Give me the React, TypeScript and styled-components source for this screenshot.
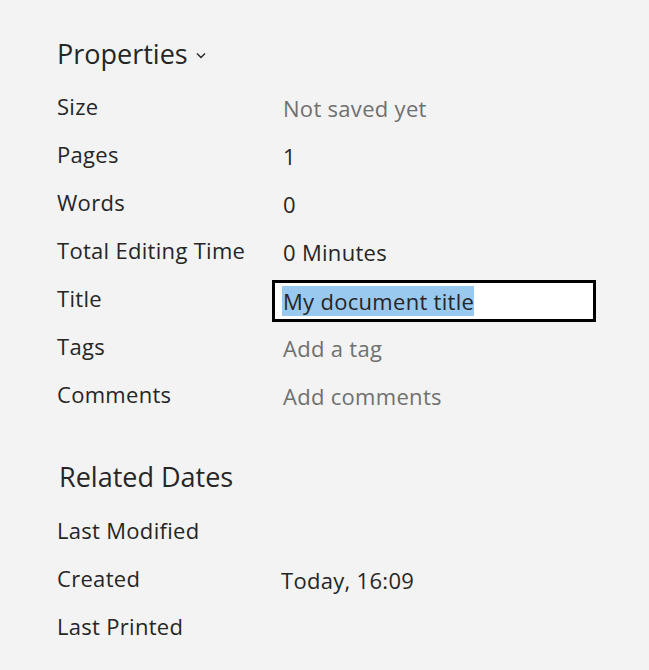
import React from 'react';
import styled, { createGlobalStyle } from 'styled-components';

const GlobalStyle = createGlobalStyle`
  html, body {
    margin: 0;
    padding: 0;
    background: #f3f3f3;
  }
  body {
    font-family: "Open Sans", "Noto Sans", sans-serif;
    color: #262626;
  }
`;

type Row = {
  label: string;
  value?: string;
  muted?: boolean;
  editable?: boolean;
};

const properties: Row[] = [
  { label: 'Size', value: 'Not saved yet', muted: true },
  { label: 'Pages', value: '1' },
  { label: 'Words', value: '0' },
  { label: 'Total Editing Time', value: '0 Minutes' },
  { label: 'Title', value: 'My document title', editable: true },
  { label: 'Tags', value: 'Add a tag', muted: true },
  { label: 'Comments', value: 'Add comments', muted: true },
];

const dates: Row[] = [
  { label: 'Last Modified' },
  { label: 'Created', value: 'Today, 16:09' },
  { label: 'Last Printed' },
];

const Chevron = () => (
  <svg width="10" height="7" viewBox="0 0 10 7" fill="none">
    <path d="M1 1.5L5 5.5L9 1.5" stroke="#262626" strokeWidth="1.4" />
  </svg>
);

export default function App() {
  return (
    <>
      <GlobalStyle />
      <StyledPage>
        <StyledHeading>
          Properties
          <StyledChevron><Chevron /></StyledChevron>
        </StyledHeading>
        <StyledList>
          {properties.map((r) => (
            <StyledRow key={r.label}>
              <StyledLabel>{r.label}</StyledLabel>
              {r.editable ? (
                <StyledInputBox>
                  <StyledSelected>{r.value}</StyledSelected>
                </StyledInputBox>
              ) : (
                <StyledValue $muted={r.muted}>{r.value}</StyledValue>
              )}
            </StyledRow>
          ))}
        </StyledList>

        <StyledSubHeading>Related Dates</StyledSubHeading>
        <StyledList>
          {dates.map((r) => (
            <StyledRow key={r.label} $dateRow>
              <StyledLabel>{r.label}</StyledLabel>
              <StyledValue>{r.value}</StyledValue>
            </StyledRow>
          ))}
        </StyledList>
      </StyledPage>
    </>
  );
}

const StyledPage = styled.div`
  width: 649px;
  height: 670px;
  box-sizing: border-box;
  padding: 34px 0 0 57px;
`;

const StyledHeading = styled.h2`
  margin: 0 0 11px;
  display: flex;
  align-items: center;
  font-size: 27px;
  font-weight: 400;
  line-height: 40px;
  color: #262626;
`;

const StyledChevron = styled.span`
  display: inline-flex;
  margin-left: 8px;
  margin-top: 2px;
`;

const StyledSubHeading = styled.h2`
  margin: 36px 0 12px 2px;
  font-size: 27px;
  font-weight: 400;
  line-height: 40px;
  color: #262626;
`;

const StyledList = styled.div`
  display: flex;
  flex-direction: column;
`;

const StyledRow = styled.div<{ $dateRow?: boolean }>`
  display: grid;
  grid-template-columns: ${(p) => (p.$dateRow ? '224px' : '226px')} 1fr;
  align-items: center;
  height: 48px;
  font-size: 22px;
  letter-spacing: 0.3px;
`;

const StyledLabel = styled.div`
  color: #262626;
  margin-top: -7px;
`;

const StyledValue = styled.div<{ $muted?: boolean }>`
  color: ${(p) => (p.$muted ? '#707070' : '#262626')};
  margin-top: -3px;
`;

const StyledInputBox = styled.div`
  margin-left: -11px;
  width: 324px;
  height: 42px;
  box-sizing: border-box;
  border: 3px solid #000;
  background: #fff;
  padding: 0 0 0 7px;
  display: flex;
  align-items: center;
`;

const StyledSelected = styled.span`
  background: #99c9ee;
  line-height: 30px;
  padding-left: 1px;
  color: #262626;
`;
